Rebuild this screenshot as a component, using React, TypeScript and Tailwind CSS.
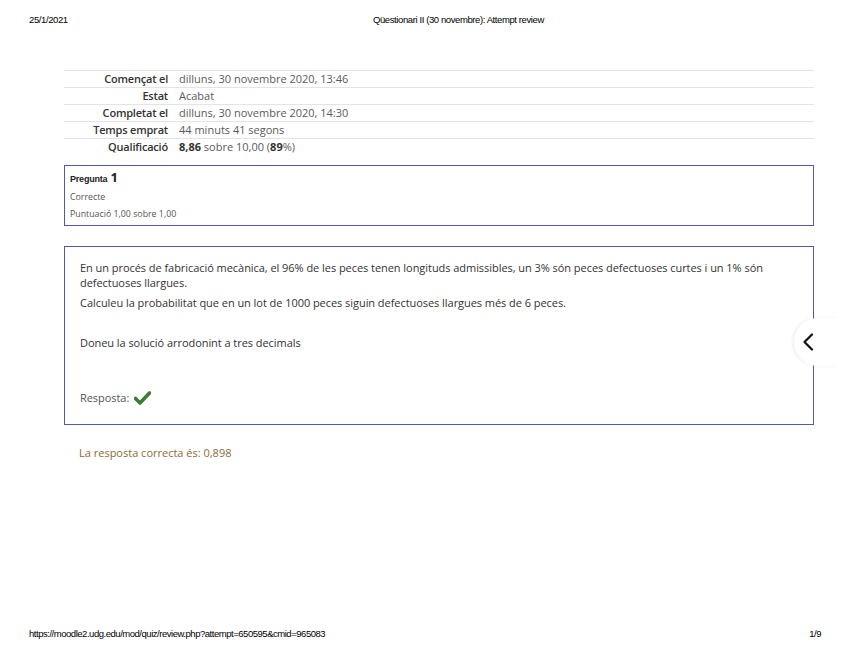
import React from 'react';

const rows: { label: string; value: React.ReactNode }[] = [
  { label: 'Començat el', value: 'dilluns, 30 novembre 2020, 13:46' },
  { label: 'Estat', value: 'Acabat' },
  { label: 'Completat el', value: 'dilluns, 30 novembre 2020, 14:30' },
  { label: 'Temps emprat', value: '44 minuts 41 segons' },
  {
    label: 'Qualificació',
    value: (
      <>
        <b className="font-bold text-[#333]">8,86</b> sobre 10,00 (<b className="font-bold text-[#333]">89</b>%)
      </>
    ),
  },
];

function Check() {
  return (
    <svg width="17" height="14" viewBox="0 0 17 14" className="inline-block">
      <path d="M1.5 7.5 L6 12 L15.5 2" stroke="#3b7d36" strokeWidth="3.6" fill="none" strokeLinecap="round" strokeLinejoin="round" />
    </svg>
  );
}

export default function App() {
  return (
    <div className="relative w-[848px] h-[654px] bg-white overflow-hidden text-[#373a3c]" style={{ fontFamily: '"Open Sans", "Noto Sans", sans-serif' }}>
      {/* print header */}
      <div className="flex h-[40px] items-center px-[29px] text-[9.5px] text-black tracking-[-0.4px]" style={{ fontFamily: '"Liberation Sans", Arial, sans-serif' }}>
        <span className="w-[80px]">25/1/2021</span>
        <span className="ml-[264px]">Qüestionari II (30 novembre): Attempt review</span>
      </div>

      <div className="ml-[64px] w-[750px] mt-[30px]">
        {/* summary table */}
        <div className="flex flex-col">
          {rows.map(r => (
            <div key={r.label} className="flex h-[17px] items-center border-t border-[#e4e4e4]">
              <div className="w-[104px] text-right text-[11px] font-semibold text-[#333] tracking-[-0.2px]">{r.label}</div>
              <div className="pl-[11px] text-[11px] text-[#5a5a5a]">{r.value}</div>
            </div>
          ))}
        </div>

        {/* question info */}
        <div className="mt-[10px] h-[61px] border-[1.5px] border-[#4c5cb4] px-[5px] pt-[2px]">
          <div className="flex items-baseline h-[15px] text-[#222]">
            <span className="text-[9px] font-bold tracking-[-0.2px]" style={{ fontFamily: '"Liberation Sans", Arial, sans-serif' }}>Pregunta</span>
            <span className="ml-[3px] text-[13px] font-bold">1</span>
          </div>
          <div className="mt-[9px] text-[8.8px] text-[#555] leading-[10px]">Correcte</div>
          <div className="mt-[7px] text-[8.8px] text-[#555] leading-[10px]">Puntuació 1,00 sobre 1,00</div>
        </div>

        {/* question text */}
        <div className="relative mt-[20px] h-[179px] border-[1.5px] border-[#4c5cb4] pl-[15px] pr-[30px] pt-[13px] text-[11px] text-[#333] leading-[15px] tracking-[-0.05px]">
          <p>
            En un procés de fabricació mecànica, el 96% de les peces tenen longituds admissibles, un 3% són peces defectuoses curtes i un 1% són defectuoses llargues.
          </p>
          <p className="mt-[5px]">Calculeu la probabilitat que en un lot de 1000 peces siguin defectuoses llargues més de 6 peces.</p>
          <p className="mt-[25px]">Doneu la solució arrodonint a tres decimals</p>
          <div className="mt-[40px] flex items-center gap-[5px] text-[#555]">
            <span>Resposta:</span>
            <Check />
          </div>

          {/* drawer toggle */}
          <div className="absolute right-[-25px] top-[71px] h-[48px] w-[44px] rounded-l-full bg-white shadow-[-2px_0_3px_rgba(0,0,0,0.06)] flex items-center justify-start pl-[8px]">
            <svg width="12" height="18" viewBox="0 0 12 18">
              <path d="M10 1.5 L2.5 9 L10 16.5" stroke="#111" strokeWidth="2.2" fill="none" strokeLinecap="round" strokeLinejoin="round" />
            </svg>
          </div>
        </div>

        <div className="mt-[20px] pl-[15px] text-[11px] text-[#8c6b34]">La resposta correcta és: 0,898</div>
      </div>

      {/* print footer */}
      <div className="absolute left-0 right-0 top-[627px] flex items-center justify-between px-[29px] text-[9.5px] text-black tracking-[-0.47px]" style={{ fontFamily: '"Liberation Sans", Arial, sans-serif' }}>
        <span>https://moodle2.udg.edu/mod/quiz/review.php?attempt=650595&amp;cmid=965083</span>
        <span className="mr-[-2px]">1/9</span>
      </div>
    </div>
  );
}
